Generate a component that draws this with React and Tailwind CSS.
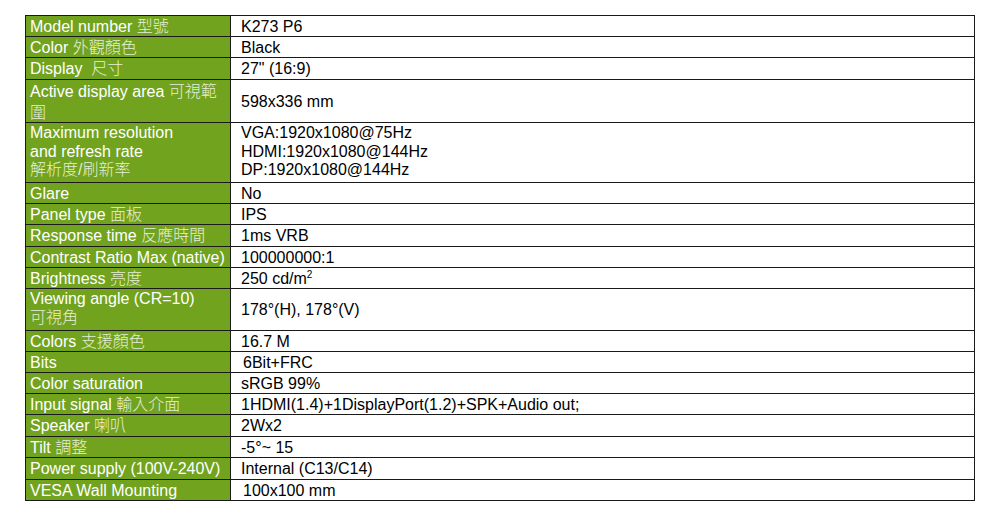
import React from 'react';

const rows = [
  { label: 'Model number 型號', value: 'K273 P6', h: 'h-[21px]' },
  { label: 'Color 外觀顏色', value: 'Black', h: 'h-[21px]' },
  { label: 'Display  尺寸', value: '27" (16:9)', h: 'h-[22px]' },
  { label: ['Active display area 可視範', '圍'], value: '598x336 mm', h: 'h-[43px]', wide: true },
  {
    label: ['Maximum resolution', 'and refresh rate', '解析度/刷新率'],
    value: ['VGA:1920x1080@75Hz', 'HDMI:1920x1080@144Hz', 'DP:1920x1080@144Hz'],
    h: 'h-[60px]',
  },
  { label: 'Glare', value: 'No', h: 'h-[21px]' },
  { label: 'Panel type 面板', value: 'IPS', h: 'h-[21px]' },
  { label: 'Response time 反應時間', value: '1ms VRB', h: 'h-[22px]' },
  { label: 'Contrast Ratio Max (native)', value: '100000000:1', h: 'h-[21px]' },
  { label: 'Brightness 亮度', value: 'brightness', h: 'h-[21px]' },
  { label: ['Viewing angle (CR=10)', '可視角'], value: '178°(H), 178°(V)', h: 'h-[42px]' },
  { label: 'Colors 支援顏色', value: '16.7 M', h: 'h-[21px]' },
  { label: 'Bits', value: '6Bit+FRC', h: 'h-[21px]', indent: true },
  { label: 'Color saturation', value: 'sRGB 99%', h: 'h-[21px]' },
  { label: 'Input signal 輸入介面', value: '1HDMI(1.4)+1DisplayPort(1.2)+SPK+Audio out;', h: 'h-[21px]' },
  { label: 'Speaker 喇叭', value: '2Wx2', h: 'h-[22px]' },
  { label: 'Tilt 調整', value: '-5°~ 15', h: 'h-[21px]' },
  { label: 'Power supply (100V-240V)', value: 'Internal (C13/C14)', h: 'h-[22px]' },
  { label: 'VESA Wall Mounting', value: '100x100 mm', h: 'h-[21px]', indent: true },
];

// CJK glyphs in the source look thinner and a touch dimmer than the latin text
const Cjk = ({ text }) => {
  const parts = text.split(/([\u3400-\u9fff]+(?:\/[\u3400-\u9fff]+)*)/);
  return parts.map((p, i) =>
    /[\u3400-\u9fff]/.test(p) ? (
      <span key={i} className="font-light text-[#e6efd6]">
        {p}
      </span>
    ) : (
      <React.Fragment key={i}>{p}</React.Fragment>
    )
  );
};

const renderValue = (row) => {
  if (row.value === 'brightness') {
    return (
      <span>
        250 cd/m<span className="text-[10px] align-top leading-none relative top-[1px]">2</span>
      </span>
    );
  }
  if (Array.isArray(row.value)) {
    return (
      <div className="flex flex-col leading-[18.5px]">
        {row.value.map((v) => (
          <span key={v}>{v}</span>
        ))}
      </div>
    );
  }
  return <span>{row.value}</span>;
};

const renderLabel = (row) => {
  if (Array.isArray(row.label)) {
    return (
      <div className={`flex flex-col ${row.wide ? 'leading-[21px]' : 'leading-[18.5px]'}`}>
        {row.label.map((l) => (
          <span key={l} className="whitespace-nowrap">
            <Cjk text={l} />
          </span>
        ))}
      </div>
    );
  }
  return (
    <span className="whitespace-pre">
      <Cjk text={row.label} />
    </span>
  );
};

export default function App() {
  return (
    <div
      className="w-[1000px] h-[517px] bg-white pt-[15px] pl-[25px] overflow-hidden"
      style={{ fontFamily: '"Liberation Sans", Arial, "Noto Sans CJK TC", sans-serif' }}
    >
      <div className="w-[950px] border-l border-r border-b border-[#1a1a1a] text-[16px]">
        {rows.map((row, i) => {
          const multi = Array.isArray(row.label);
          return (
            <div key={i} className={`flex border-t border-[#1a1a1a] ${row.h}`}>
              <div
                className={`w-[205px] shrink-0 bg-[#72a31f] text-white pl-[4px] pr-[2px] border-r border-[#1a1a1a] flex overflow-hidden ${
                  multi ? 'items-start pt-[1px]' : 'items-center leading-[19px]'
                }`}
              >
                {renderLabel(row)}
              </div>
              <div
                className={`flex-1 text-black flex leading-[19px] ${row.indent ? 'pl-[12px]' : 'pl-[10px]'} ${
                  Array.isArray(row.value) ? 'items-start pt-[1px]' : 'items-center'
                }`}
              >
                {renderValue(row)}
              </div>
            </div>
          );
        })}
      </div>
    </div>
  );
}
